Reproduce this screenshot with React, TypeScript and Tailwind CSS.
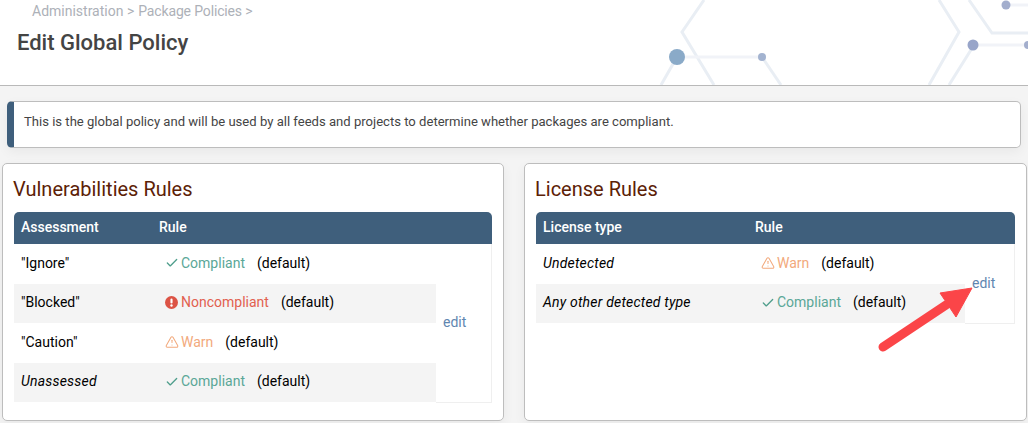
import React from 'react';
import { Check, TriangleAlert } from 'lucide-react';

type Status = 'compliant' | 'noncompliant' | 'warn';

interface Row {
  name: string;
  italic?: boolean;
  status: Status;
}

const vulnerabilityRows: Row[] = [
  { name: '"Ignore"', status: 'compliant' },
  { name: '"Blocked"', status: 'noncompliant' },
  { name: '"Caution"', status: 'warn' },
  { name: 'Unassessed', italic: true, status: 'compliant' },
];

const licenseRows: Row[] = [
  { name: 'Undetected', italic: true, status: 'warn' },
  { name: 'Any other detected type', italic: true, status: 'compliant' },
];

const HeaderArt = () => (
  <svg className="absolute inset-0 h-[85px] w-full blur-[0.7px]" viewBox="0 0 1028 85" fill="none">
    <g stroke="#e9eef4" strokeWidth="3">
      <path d="M704 0L682 32L714 85" />
      <path d="M939 0L959 32L929 85" />
      <path d="M969 0L992 33H1028" />
      <path d="M974 45L949 85" />
      <path d="M677 57L661 85" />
      <path d="M762 57L781 85" />
    </g>
    <g stroke="#f1f3f8" strokeWidth="3">
      <path d="M677 57H762" />
      <path d="M974 45H1028" />
      <path d="M1006 5H1028" />
    </g>
    <circle cx="677" cy="57" r="8" fill="#8aaac8" />
    <circle cx="762" cy="57" r="4" fill="#a3b3d0" />
    <circle cx="973" cy="45" r="5.5" fill="#98a5c9" />
    <circle cx="1006" cy="5" r="4.5" fill="#a3aecd" />
    <circle cx="1028" cy="45" r="4" fill="#a3aecd" />
  </svg>
);

const StatusLabel = ({ status }: { status: Status }) => {
  if (status === 'compliant') {
    return (
      <span className="flex items-center gap-[2px] text-[#5aa797]">
        <Check className="h-[14px] w-[14px] text-[#4f9e8c]" strokeWidth={2.25} />
        Compliant
      </span>
    );
  }
  if (status === 'noncompliant') {
    return (
      <span className="flex items-center gap-[3px] text-[#e2604f]">
        <svg className="h-[13px] w-[13px]" viewBox="0 0 12 12">
          <circle cx="6" cy="6" r="6" fill="#dc5345" />
          <rect x="5" y="2.4" width="2" height="4.6" rx="1" fill="#fff" />
          <circle cx="6" cy="8.8" r="1.1" fill="#fff" />
        </svg>
        Noncompliant
      </span>
    );
  }
  return (
    <span className="flex items-center gap-[2px] text-[#f2a97c]">
      <TriangleAlert className="h-[14px] w-[14px] text-[#f2a97c]" strokeWidth={1.75} />
      Warn
    </span>
  );
};

const RulesTable = ({
  firstColumn,
  firstWidth,
  ruleWidth,
  rows,
}: {
  firstColumn: string;
  firstWidth: string;
  ruleWidth: string;
  rows: Row[];
}) => (
  <table className="w-full table-fixed border-collapse text-[14px]">
    <thead>
      <tr className="h-[32px] bg-[#3f5f7c] text-left text-white">
        <th className={`${firstWidth} rounded-tl-[5px] pb-[2px] pl-[7px] font-medium`}>{firstColumn}</th>
        <th className={`${ruleWidth} pb-[2px] pl-[7px] font-medium`}>Rule</th>
        <th className="rounded-tr-[5px]" />
      </tr>
    </thead>
    <tbody>
      {rows.map((row, i) => (
        <tr key={row.name} className="h-[39.5px]">
          <td
            className={`pb-[1px] pl-[7px] text-black ${i % 2 ? 'bg-[#f4f4f4]' : ''} ${
              row.italic ? 'italic tracking-[0.2px]' : ''
            }`}
          >
            {row.name}
          </td>
          <td className={`pb-[1px] pl-[13px] ${i % 2 ? 'bg-[#f4f4f4]' : ''}`}>
            <div className="flex items-center gap-[12px]">
              <StatusLabel status={row.status} />
              <span className="text-black">(default)</span>
            </div>
          </td>
          {i === 0 && (
            <td rowSpan={rows.length} className="border-r border-b border-[#efefef] pl-[7px] align-middle">
              <a href="#" className="text-[#5f86b0]">
                edit
              </a>
            </td>
          )}
        </tr>
      ))}
    </tbody>
  </table>
);

export default function App() {
  return (
    <div className="relative h-[423px] w-[1028px] overflow-hidden bg-[#f4f4f4] font-['Roboto',sans-serif]">
      {/* Page header */}
      <div className="relative h-[86px] border-b border-[#b9b9b9] bg-white">
        <HeaderArt />
        <div className="relative flex gap-[4px] pl-[32px] pt-[2px] text-[14px] leading-[18px] text-[#adb1b8]">
          <span>Administration &gt;</span>
          <span className="tracking-[-0.15px]">Package Policies &gt;</span>
        </div>
        <h1 className="relative pl-[17px] pt-[10px] text-[22px] leading-[26px] font-medium text-[#444444]">
          Edit Global Policy
        </h1>
      </div>

      {/* Info banner */}
      <div className="mx-[7px] mt-[15px] flex h-[47px] w-[1014px] items-center rounded-[5px] border border-[#bdbdbd] border-l-[7px] border-l-[#3f5f7c] bg-white pb-[5px] pl-[10px] text-[13.08px] text-[#444444] shadow-[0_4px_12px_rgba(0,0,0,0.05)]">
        This is the global policy and will be used by all feeds and projects to determine whether packages are compliant.
      </div>

      {/* Rule cards */}
      <div className="mt-[15px] flex gap-[20px] pl-[2px]">
        <section className="h-[258px] w-[502px] rounded-[5px] border border-[#bdbdbd] bg-white pl-[11px] pr-[11px] shadow-[0_4px_12px_rgba(0,0,0,0.05)]">
          <h2 className="-ml-px pt-[12px] pb-[10px] text-[20px] leading-[26px] text-[#5c2106]">Vulnerabilities Rules</h2>
          <RulesTable
            firstColumn="Assessment"
            firstWidth="w-[138px]"
            ruleWidth="w-[284px]"
            rows={vulnerabilityRows}
          />
        </section>
        <section className="h-[258px] w-[503px] rounded-[5px] border border-[#bdbdbd] bg-white pl-[11px] pr-[11px] shadow-[0_4px_12px_rgba(0,0,0,0.05)]">
          <h2 className="-ml-px pt-[12px] pb-[10px] text-[20px] leading-[26px] text-[#5c2106]">License Rules</h2>
          <RulesTable
            firstColumn="License type"
            firstWidth="w-[212px]"
            ruleWidth="w-[217px]"
            rows={licenseRows}
          />
        </section>
      </div>

      {/* Annotation arrow */}
      <svg className="absolute left-[870px] top-[280px] h-[80px] w-[110px]" viewBox="0 0 110 80" fill="none">
        <path d="M13 67L76 25" stroke="#fb4548" strokeWidth="9" strokeLinecap="round" />
        <path d="M102 8L70 13L86 37Z" fill="#fb4548" stroke="#fb4548" strokeWidth="1" strokeLinejoin="round" />
      </svg>
    </div>
  );
}
